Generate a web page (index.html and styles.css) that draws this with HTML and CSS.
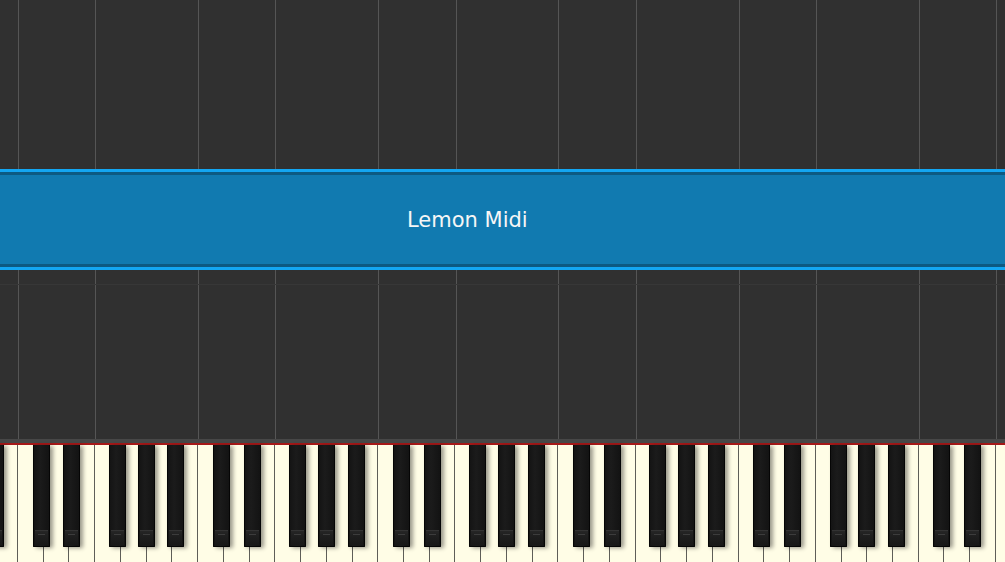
FILE: index.html
```html
<!DOCTYPE html>
<html>
<head>
<meta charset="utf-8">
<title>Lemon Midi</title>
<link rel="stylesheet" href="styles.css">
</head>
<body>
<div class="app">
  <div class="roll">
    <div class="roll-top"></div>
    <div class="banner"><span class="title">Lemon Midi</span></div>
    <div class="roll-bottom"></div>
  </div>
  <div class="rim"></div>
  <div class="keys">
    <div class="wk"><div class="bk as"></div></div>
    <div class="wk"></div>

    <div class="wk"><div class="bk cs"></div></div>
    <div class="wk"><div class="bk ds"></div></div>
    <div class="wk"></div>
    <div class="wk"><div class="bk fs"></div></div>
    <div class="wk"><div class="bk gs"></div></div>
    <div class="wk"><div class="bk as"></div></div>
    <div class="wk"></div>

    <div class="wk"><div class="bk cs"></div></div>
    <div class="wk"><div class="bk ds"></div></div>
    <div class="wk"></div>
    <div class="wk"><div class="bk fs"></div></div>
    <div class="wk"><div class="bk gs"></div></div>
    <div class="wk"><div class="bk as"></div></div>
    <div class="wk"></div>

    <div class="wk"><div class="bk cs"></div></div>
    <div class="wk"><div class="bk ds"></div></div>
    <div class="wk"></div>
    <div class="wk"><div class="bk fs"></div></div>
    <div class="wk"><div class="bk gs"></div></div>
    <div class="wk"><div class="bk as"></div></div>
    <div class="wk"></div>

    <div class="wk"><div class="bk cs"></div></div>
    <div class="wk"><div class="bk ds"></div></div>
    <div class="wk"></div>
    <div class="wk"><div class="bk fs"></div></div>
    <div class="wk"><div class="bk gs"></div></div>
    <div class="wk"><div class="bk as"></div></div>
    <div class="wk"></div>

    <div class="wk"><div class="bk cs"></div></div>
    <div class="wk"><div class="bk ds"></div></div>
    <div class="wk"></div>
    <div class="wk"><div class="bk fs"></div></div>
    <div class="wk"><div class="bk gs"></div></div>
    <div class="wk"><div class="bk as"></div></div>
    <div class="wk"></div>

    <div class="wk"><div class="bk cs"></div></div>
    <div class="wk"><div class="bk ds"></div></div>
    <div class="wk"></div>
    <div class="wk"><div class="bk fs"></div></div>
  </div>
</div>
</body>
</html>
```
FILE: styles.css
```css
html, body {
  margin: 0;
  padding: 0;
  background: #303030;
  overflow: hidden;
}

.app {
  width: 1005px;
  height: 562px;
  display: flex;
  flex-direction: column;
  overflow: hidden;
}

.roll {
  height: 439px;
  display: flex;
  flex-direction: column;
  background-color: #303030;
  background-image:
    linear-gradient(to bottom, transparent 284px, #373737 284px, #373737 285px, transparent 285px),
    repeating-linear-gradient(to right,
      transparent 0, transparent 18px,
      #555555 18px, #555555 19px,
      transparent 19px, transparent 95.2px,
      #555555 95.2px, #555555 96.2px,
      transparent 96.2px, transparent 180.16px);
}

.roll-top {
  height: 169px;
  flex: 0 0 auto;
}

.banner {
  flex: 0 0 auto;
  height: 95px;
  box-sizing: content-box;
  border-top: 3px solid #13a6f2;
  border-bottom: 3px solid #13a6f2;
  background: #117ab0;
  box-shadow: inset 0 3px 0 #0d5a82, inset 0 -3px 0 #0d5a82;
  display: flex;
  align-items: center;
  padding-left: 407px;
}

.title {
  font-family: "DejaVu Sans", sans-serif;
  font-size: 21px;
  color: #f6f6f6;
  line-height: 1;
  margin-top: 1px;
}

.roll-bottom {
  flex: 1 1 auto;
}

.rim {
  height: 4px;
  background: #474747;
  flex: 0 0 auto;
}

.keys {
  flex: 1 1 auto;
  display: flex;
  border-top: 2px solid #a51818;
  margin-left: -33.47px;
  background: #fffde6;
}

.wk {
  flex: 0 0 25.737px;
  box-sizing: border-box;
  position: relative;
  background: #fffde6;
  border-right: 1px solid #5e5e58;
}

.bk {
  position: absolute;
  top: 0;
  width: 17px;
  height: 102px;
  box-sizing: border-box;
  z-index: 2;
  border: 1px solid #050505;
  border-top: none;
  border-radius: 0 0 1px 1px;
  background: linear-gradient(to right, #141414 0, #1b1b1b 40%, #131313 100%);
  box-shadow: 3px 1px 4px rgba(0, 0, 0, 0.4);
}

.bk::after {
  content: "";
  position: absolute;
  left: 1px;
  right: 1px;
  bottom: 1px;
  height: 14px;
  background: linear-gradient(to bottom, #262626 0, #1f1f1f 30%, #181818 100%);
  border-top: 1px solid #333;
}

.bk::before {
  content: "";
  position: absolute;
  left: 4px;
  right: 4px;
  bottom: 11px;
  height: 1px;
  background: #3c3c3c;
  z-index: 1;
}

.cs { right: -7px; }
.ds { right: -12px; }
.fs { right: -6px; }
.gs { right: -9px; }
.as { right: -13px; }
```
